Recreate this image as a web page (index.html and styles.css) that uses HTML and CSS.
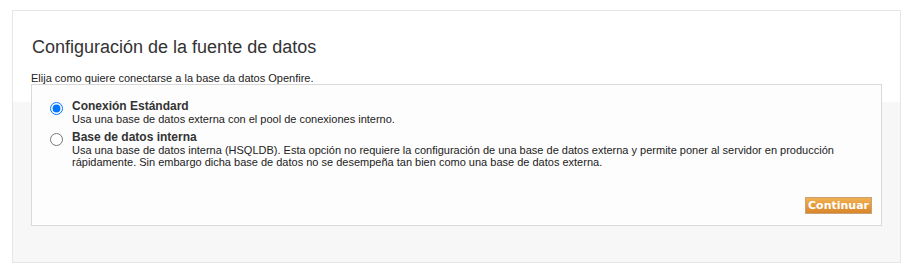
FILE: index.html
```html
<!DOCTYPE html>
<html>

<head>
    <meta charset="utf-8">
    <title>Openfire Setup</title>
    <link rel="stylesheet" href="styles.css">
</head>

<body>
    <div id="setup_panel">
        <h1 class="title">Configuración de la fuente de datos</h1>
        <p class="intro">Elija como quiere conectarse a la base da datos Openfire.</p>

        <form id="db_form" action="setup-datasource-settings.jsp">
            <div class="option">
                <input type="radio" name="mode" id="standard" value="standard" checked>
                <label for="standard">
                    <span class="option_title">Conexión Estándard</span>
                    <span class="option_desc">Usa una base de datos externa con el pool de conexiones interno.</span>
                </label>
            </div>
            <div class="option">
                <input type="radio" name="mode" id="embedded" value="embedded">
                <label for="embedded">
                    <span class="option_title">Base de datos interna</span>
                    <span class="option_desc">Usa una base de datos interna (HSQLDB). Esta opción no requiere la configuración de una base de datos externa y permite poner al servidor en producción rápidamente. Sin embargo dicha base de datos no se desempeña tan bien como una base de datos externa.</span>
                </label>
            </div>

            <div class="actions">
                <input type="submit" class="button" value="Continuar">
            </div>
        </form>
    </div>
</body>

</html>
```

FILE: styles.css
```css
body {
    margin: 10px 21px 0 12px;
    font-family: 'Liberation Sans', Arial, sans-serif;
    color: #333;
    background: #fff;
}

#setup_panel {
    border: 1px solid #e6e6e6;
    background: linear-gradient(to bottom, #fff 91px, #f7f7f7 91px);
    padding: 26px 18px 36px 18px;
}

.title {
    font-size: 18px;
    font-weight: normal;
    margin: 0 0 0 1px;
    color: #333;
}

.intro {
    font-size: 11px;
    line-height: 12px;
    margin: 14px 0 0 0;
    color: #222;
}

#db_form {
    border: 1px solid #d9d9d9;
    background: #fdfdfd;
    padding: 15px 9px 11px 12px;
}

.option {
    display: flex;
    align-items: flex-start;
    margin-bottom: 6px;
}

.option input {
    margin: 2px 9px 0 6px;
    width: 13px;
    height: 13px;
}

.option label {
    display: flex;
    flex-direction: column;
    font-size: 11px;
    line-height: 12px;
    color: #222;
}

.option_title {
    font-size: 12px;
    font-weight: bold;
    color: #333;
    line-height: 13px;
}

.actions {
    display: flex;
    justify-content: flex-end;
    margin-top: 29px;
}

.button {
    font-family: 'DejaVu Sans', Verdana, sans-serif;
    font-size: 11px;
    font-weight: bold;
    color: #fff;
    background: linear-gradient(to bottom, #f0b050, #d9862a);
    border: 1px solid #c9a27a;
    padding: 0 2px;
    height: 17px;
}
```
